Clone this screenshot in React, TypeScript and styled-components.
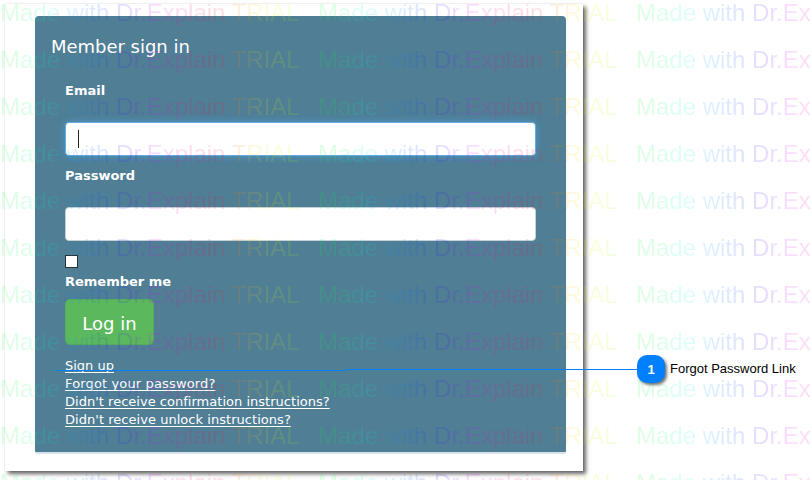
import React from "react";
import styled, { createGlobalStyle } from "styled-components";

const GlobalStyle = createGlobalStyle`
  * { box-sizing: border-box; }
  body { margin: 0; background: #fff; overflow: hidden; }
`;

const Page = styled.main`
  position: relative;
  width: 812px;
  height: 480px;
  padding: 4px 0 0 5px;
  overflow: hidden;
  background: #fff;
  font-family: "DejaVu Sans", sans-serif;
`;

const Frame = styled.div`
  width: 578px;
  height: 467px;
  padding: 12px 17px 0 30px;
  background: #fff;
  box-shadow: 0 0 1px rgba(0, 0, 0, 0.2), 3px 3px 4px rgba(0, 0, 0, 0.6);
`;

const Panel = styled.section`
  width: 531px;
  height: 436px;
  padding: 19px 30px 0;
  border-radius: 4px 4px 1px 1px;
  background: #4f7e95;
  box-shadow: 0 2px 1px #d5e1e8;
  color: #fff;
`;

const Title = styled.h1`
  margin: 0 0 0 -14px;
  font-size: 18px;
  font-weight: 400;
  line-height: 24px;
  letter-spacing: -0.02px;
`;

const Form = styled.form`
  display: flex;
  flex-direction: column;
  align-items: flex-start;
  padding-top: 23px;
`;

const Label = styled.label`
  height: 18px;
  font-size: 13px;
  font-weight: 700;
  line-height: 18px;
  white-space: nowrap;
`;

const Field = styled.div<{ $focused?: boolean }>`
  display: flex;
  align-items: center;
  width: 471px;
  height: 34px;
  margin: 22px 0 ${(p) => (p.$focused ? 11 : 14)}px;
  padding-left: 12px;
  border: 1px solid ${(p) => (p.$focused ? "#66a9dc" : "#c3d1d9")};
  border-radius: 4px;
  background: #fff;
  box-shadow: ${(p) => (p.$focused ? "0 0 8px rgba(75, 157, 213, 0.85)" : "none")};
`;

const Caret = styled.span`
  width: 1px;
  height: 18px;
  background: #222;
`;

const Checkbox = styled.span`
  width: 13px;
  height: 13px;
  margin-bottom: 5px;
  border: 1px solid #263238;
  background: #fff;
`;

const LoginButton = styled.button`
  width: 89px;
  height: 46px;
  margin: 8px 0 12px;
  padding: 2px 0 0;
  border: 1px solid #54ad58;
  border-radius: 5px;
  background: #5cb85c;
  color: #fff;
  font: 18px "DejaVu Sans", sans-serif;
`;

const Link = styled.a<{ $spacing: number }>`
  font-size: 13px;
  line-height: 18px;
  letter-spacing: ${(p) => p.$spacing}px;
  text-decoration: underline;
  text-underline-offset: 2px;
  text-decoration-thickness: 1px;
  text-decoration-skip-ink: none;
  white-space: nowrap;
`;

const WatermarkLayer = styled.div`
  position: absolute;
  top: 0;
  left: 0;
  display: grid;
  grid-template-columns: repeat(3, 318px);
  grid-auto-rows: 47px;
  opacity: 0.13;
  pointer-events: none;
`;

const Watermark = styled.span`
  width: 318px;
  font: 24px/25px "Liberation Sans", Arial, sans-serif;
  white-space: pre;
  color: transparent;
  background: linear-gradient(90deg, #00ff30 0, #00ff60 25px, #00ffe0 50px, #00a0ff 72px,
    #0030ff 108px, #5000ff 130px, #e000ff 155px, #ff0080 185px, #ff0030 218px,
    #ff8000 238px, #ffe000 258px, #e0ff00 275px, #90ff00 298px);
  background-clip: text;
  -webkit-background-clip: text;
`;

const Callout = styled.div`
  position: absolute;
  top: 355px;
  left: 55px;
  display: flex;
  align-items: center;
`;

const Leader = styled.svg`
  display: block;
  width: 582px;
  height: 28px;
`;

const Badge = styled.span`
  width: 28px;
  height: 28px;
  border-radius: 10px;
  background: #0080ff;
  box-shadow: 2px 2px 3px rgba(0, 0, 0, 0.55);
  color: #fff;
  font: 700 13px/29px "Liberation Sans", Arial, sans-serif;
  text-align: center;
`;

const CalloutText = styled.span`
  margin-left: 5px;
  color: #000;
  font: 13px/28px "Liberation Sans", Arial, sans-serif;
  white-space: nowrap;
`;

const links = [
  { text: "Sign up", spacing: 0 },
  { text: "Forgot your password?", spacing: 0.14 },
  { text: "Didn't receive confirmation instructions?", spacing: 0.02 },
  { text: "Didn't receive unlock instructions?", spacing: 0.04 },
];

export default function App() {
  return (
    <Page>
      <GlobalStyle />
      <Frame>
        <Panel>
          <Title>Member sign in</Title>
          <Form>
            <Label>Email</Label>
            <Field $focused>
              <Caret />
            </Field>
            <Label>Password</Label>
            <Field />
            <Checkbox />
            <Label>Remember me</Label>
            <LoginButton type="button">Log in</LoginButton>
            {links.map((link) => (
              <Link key={link.text} $spacing={link.spacing}>
                {link.text}
              </Link>
            ))}
          </Form>
        </Panel>
      </Frame>
      <WatermarkLayer aria-hidden>
        {Array.from({ length: 33 }, (_, i) => (
          <Watermark key={i}>Made with Dr.Explain TRIAL</Watermark>
        ))}
      </WatermarkLayer>
      <Callout>
        <Leader viewBox="0 0 582 28" shapeRendering="crispEdges">
          <rect x="0" y="15" width="291" height="1" fill="#0080ff" />
          <rect x="291" y="14" width="291" height="1" fill="#0080ff" />
        </Leader>
        <Badge>1</Badge>
        <CalloutText>Forgot Password Link</CalloutText>
      </Callout>
    </Page>
  );
}
